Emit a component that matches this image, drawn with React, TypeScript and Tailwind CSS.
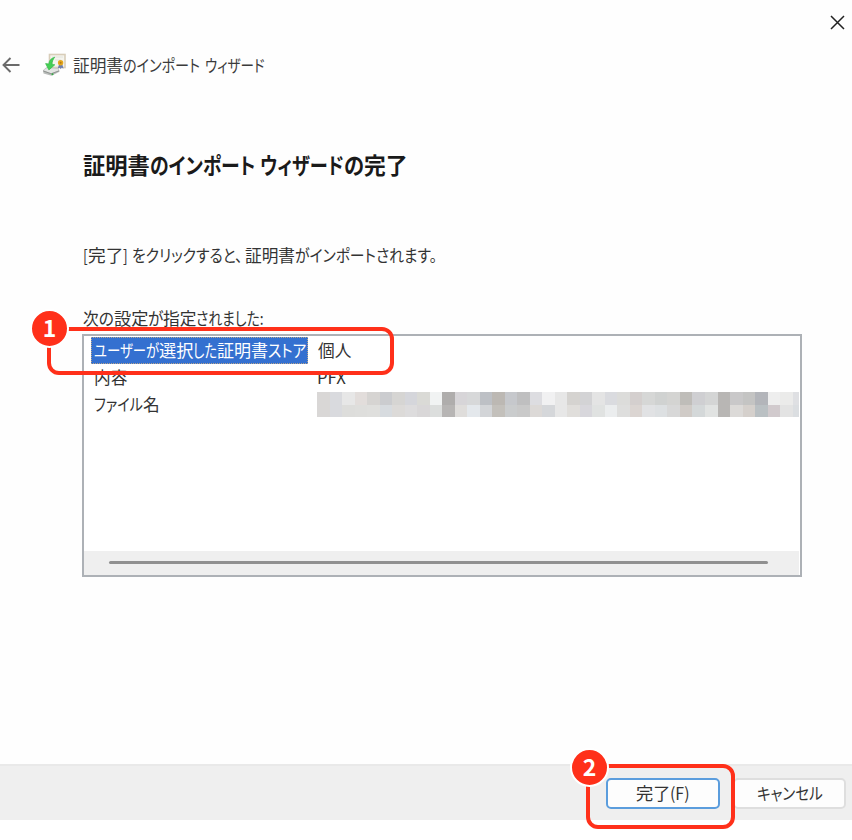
import { useLayoutEffect, useRef, useState } from "react";

type RunProps = { text: string; width: number; gap?: number };

/** A stretch of text condensed to a given advance width. */
function Run({ text, width, gap = 0 }: RunProps) {
  const ref = useRef<HTMLSpanElement>(null);
  const [scale, setScale] = useState(1);
  useLayoutEffect(() => {
    if (ref.current) setScale(width / ref.current.offsetWidth);
  }, [text, width]);
  return (
    <span className="block shrink-0" style={{ width, marginRight: gap }}>
      <span
        ref={ref}
        className="inline-block origin-left whitespace-pre"
        style={{ transform: `scaleX(${scale})` }}
      >
        {text}
      </span>
    </span>
  );
}

function Line({ runs, className = "" }: { runs: RunProps[]; className?: string }) {
  return (
    <div className={`flex whitespace-nowrap ${className}`}>
      {runs.map((r, i) => (
        <Run key={i} {...r} />
      ))}
    </div>
  );
}

const mosaicTop =
  "d9d7d6 d9dade e7e7e7 e2dddb d6d4d2 cbcccf d6d5d3 d5d6db dadad6 f1f3f3 afadac d7d5d8 d7d8d9 bdc0c5 bcb8b3 c6c8cc bfbfc0 dddde1 f1f1f2 e7e7e7 d5d3d0 d3d3d5 e4e4e4 dadbdf dcdcda d4cfce d6d7d6 d0d2d1 d4d4d2 bfbdb9 cfcfd2 d4d5d5 b8b6b4 c9c8c9 c4c4c3 b3b5ba eeeeee ebebea dfe0e3".split(" ");
const mosaicBottom =
  "d9d7d6 d9dade dddddb dededc dfdfdd d7dbdf dcdad8 dddcdd d9d7d8 dcdedd b7b5b4 dfdddb e4e8ec d3d5d8 c3c0bb cacccd c9c9c9 dcd9d7 d5d7da e7e7e7 e0dedb d8d7dc e0e2e1 ebedee dededd dbd5d2 e1e2e4 dde0e2 d8d8d8 d0cbc7 d4d8d9 e1e3e2 b8b6b4 dcdad8 d5d0cc bac0c3 d1cacd e3e3e3 dbdee1".split(" ");

function Mosaic() {
  return (
    <div className="w-[482px] overflow-hidden">
      {[mosaicTop, mosaicBottom].map((row, i) => (
        <div key={i} className="flex">
          {row.map((c, j) => (
            <div key={j} className="h-[12.75px] w-[12.53px] shrink-0" style={{ background: `#${c}` }} />
          ))}
        </div>
      ))}
    </div>
  );
}

function CertificateIcon() {
  return (
    <svg className="block h-[24px] w-[25px]" viewBox="0 0 25 24">
      <rect x="7.5" y="1.5" width="15.5" height="13" fill="#f5f4ed" stroke="#d8cdb9" strokeWidth="1.6" />
      <path d="M10 4h11M13 7h6" stroke="#e2e4de" />
      <path d="M17.2 11l-1.5 4.6 2.2-.9.8 1.5.8-1.5 2 .7-1.3-4.4z" fill="#6e7fae" />
      <circle cx="18.6" cy="9.8" r="2.7" fill="#e5a81d" />
      <circle cx="18.6" cy="9.8" r="1" fill="#b6790d" />
      <path d="M1 17.2l3.5-3 12 1 1 3.6-8 4-8-2.3z" fill="#b9bcba" />
      <path d="M1.5 17.3l3.4-2.3 11 .8.8 1.8-7.5 2.7z" fill="#e3e5e3" />
      <path d="M1.2 18l8 2.8 8-3" fill="none" stroke="#858a87" strokeWidth=".8" />
      <circle cx="10.5" cy="21.2" r="1" fill="#36a845" />
      <path d="M12.7 4.2C8.8 5.4 7 7.7 6.8 11L3.6 10.6l3.3 6.3 5.9-5.1-2.7-.4c-.1-2.7.8-4.9 2.6-7.2z" fill="#45cf55" stroke="#35b947" strokeWidth=".7" />
    </svg>
  );
}

function Badge({ n, className }: { n: string; className: string }) {
  return (
    <div
      className={`absolute flex size-[39px] items-center justify-center rounded-full border-2 border-white bg-[#ff301a] pb-[2px] text-[23px] leading-none font-bold text-white ${className}`}
    >
      {n}
    </div>
  );
}

export default function App() {
  return (
    <div className="relative flex h-[840px] w-[852px] flex-col overflow-hidden bg-[#fefefe] font-['Noto_Sans_CJK_JP',sans-serif] text-[16.7px] leading-[24px] text-[#333] [font-feature-settings:'palt']">
      <div className="flex h-[44px] shrink-0 items-center justify-end pr-[7px]">
        <svg className="mt-[1px] size-[15px]" viewBox="0 0 15 15" fill="none" stroke="#222" strokeWidth="1.5">
          <path d="M1 1l13 13M14 1L1 14" />
        </svg>
      </div>
      <header className="flex h-[42px] shrink-0 items-center pl-[2px]">
        <svg className="mr-[22px] h-[16px] w-[18px]" viewBox="0 0 18 16" fill="none" stroke="#6b6b6b" strokeWidth="1.9">
          <path d="M8.5 1L1.5 8l7 7M1.5 8h16" />
        </svg>
        <CertificateIcon />
        <Line
          className="mb-[1px] ml-[6px] text-[#3b3b3b]"
          runs={[
            { text: "証明書", width: 50 },
            { text: "のインポート", width: 77, gap: 5 },
            { text: "ウィザード", width: 60 },
          ]}
        />
      </header>

      <main className="flex h-[678px] shrink-0 flex-col pl-[82px]">
        <Line
          className="mt-[62px] h-[32px] pl-[1px] text-[22.3px] leading-[32px] font-bold text-[#1a1a1a]"
          runs={[
            { text: "証明書", width: 67 },
            { text: "のインポート", width: 105, gap: 5 },
            { text: "ウィザード", width: 84 },
            { text: "の", width: 20 },
            { text: "完了", width: 44 },
          ]}
        />
        <Line
          className="mt-[63px] h-[24px] pl-[1px]"
          runs={[
            { text: "[", width: 5 },
            { text: "完了", width: 35 },
            { text: "]", width: 5, gap: 4 },
            { text: "をクリックすると、", width: 111, gap: 2 },
            { text: "証明書", width: 50 },
            { text: "がインポートされます。", width: 142 },
          ]}
        />
        <Line
          className="mt-[39px] h-[24px] pl-[1px]"
          runs={[
            { text: "次の", width: 31 },
            { text: "設定", width: 34 },
            { text: "が", width: 15 },
            { text: "指定", width: 33 },
            { text: "されました:", width: 68 },
          ]}
        />
        <section className="mt-[4px] flex h-[243px] w-[720px] flex-col border-2 border-[#adb1b6] bg-white">
          <div className="flex flex-col pl-[7px]">
            <div className="mt-[1px] flex h-[27px] items-center">
              <div className="flex h-[27px] w-[217px] items-center border border-dotted border-[#b9a58b] bg-[#3470d0] pb-[2px] pl-[2px] text-white">
                <Line
                  runs={[
                    { text: "ユーザーが", width: 65 },
                    { text: "選択", width: 34 },
                    { text: "した", width: 24 },
                    { text: "証明書", width: 51 },
                    { text: "ストア", width: 38 },
                  ]}
                />
              </div>
              <Line className="mb-[2px] ml-[10px]" runs={[{ text: "個人", width: 33 }]} />
            </div>
            <div className="flex h-[27px] items-center pb-[2px] pl-[3px]">
              <div className="w-[223px]">
                <Line runs={[{ text: "内容", width: 33 }]} />
              </div>
              <Line runs={[{ text: "PFX", width: 29 }]} />
            </div>
            <div className="flex h-[27px] items-center pl-[3px]">
              <div className="w-[223px] shrink-0 pb-[2px]">
                <Line
                  runs={[
                    { text: "ファイル", width: 49 },
                    { text: "名", width: 17 },
                  ]}
                />
              </div>
              <Mosaic />
            </div>
          </div>
          <div className="mt-auto mr-[1px] flex h-[24px] items-center bg-[#efefef] pr-[31px] pl-[25px]">
            <div className="mb-[1px] h-[3px] w-full rounded-full bg-[#909090]" />
          </div>
        </section>
      </main>

      <footer className="flex h-[56px] shrink-0 items-center justify-end gap-[13px] border-t-2 border-[#e9e9e9] bg-[#efefef] pr-[6px]">
        <button className="flex h-[31px] w-[114px] items-center justify-center rounded-[5px] border-2 border-[#5b9ddd] bg-[#fdfdfd]">
          <Line
            runs={[
              { text: "完了", width: 34 },
              { text: "(F)", width: 20 },
            ]}
          />
        </button>
        <button className="flex h-[31px] w-[113px] items-center justify-center rounded-[5px] border-2 border-[#dedede] bg-[#fdfdfd]">
          <Line runs={[{ text: "キャンセル", width: 66 }]} />
        </button>
      </footer>
      <div className="h-[20px] shrink-0 bg-white" />

      <div className="absolute top-[327px] left-[47px] h-[48px] w-[347px] rounded-[12px] border-4 border-[#ff301a]" />
      <Badge n="1" className="top-[309px] left-[30px]" />
      <div className="absolute top-[764px] left-[586px] h-[65px] w-[149px] rounded-[12px] border-4 border-[#ff301a]" />
      <Badge n="2" className="top-[748px] left-[570px]" />
    </div>
  );
}
